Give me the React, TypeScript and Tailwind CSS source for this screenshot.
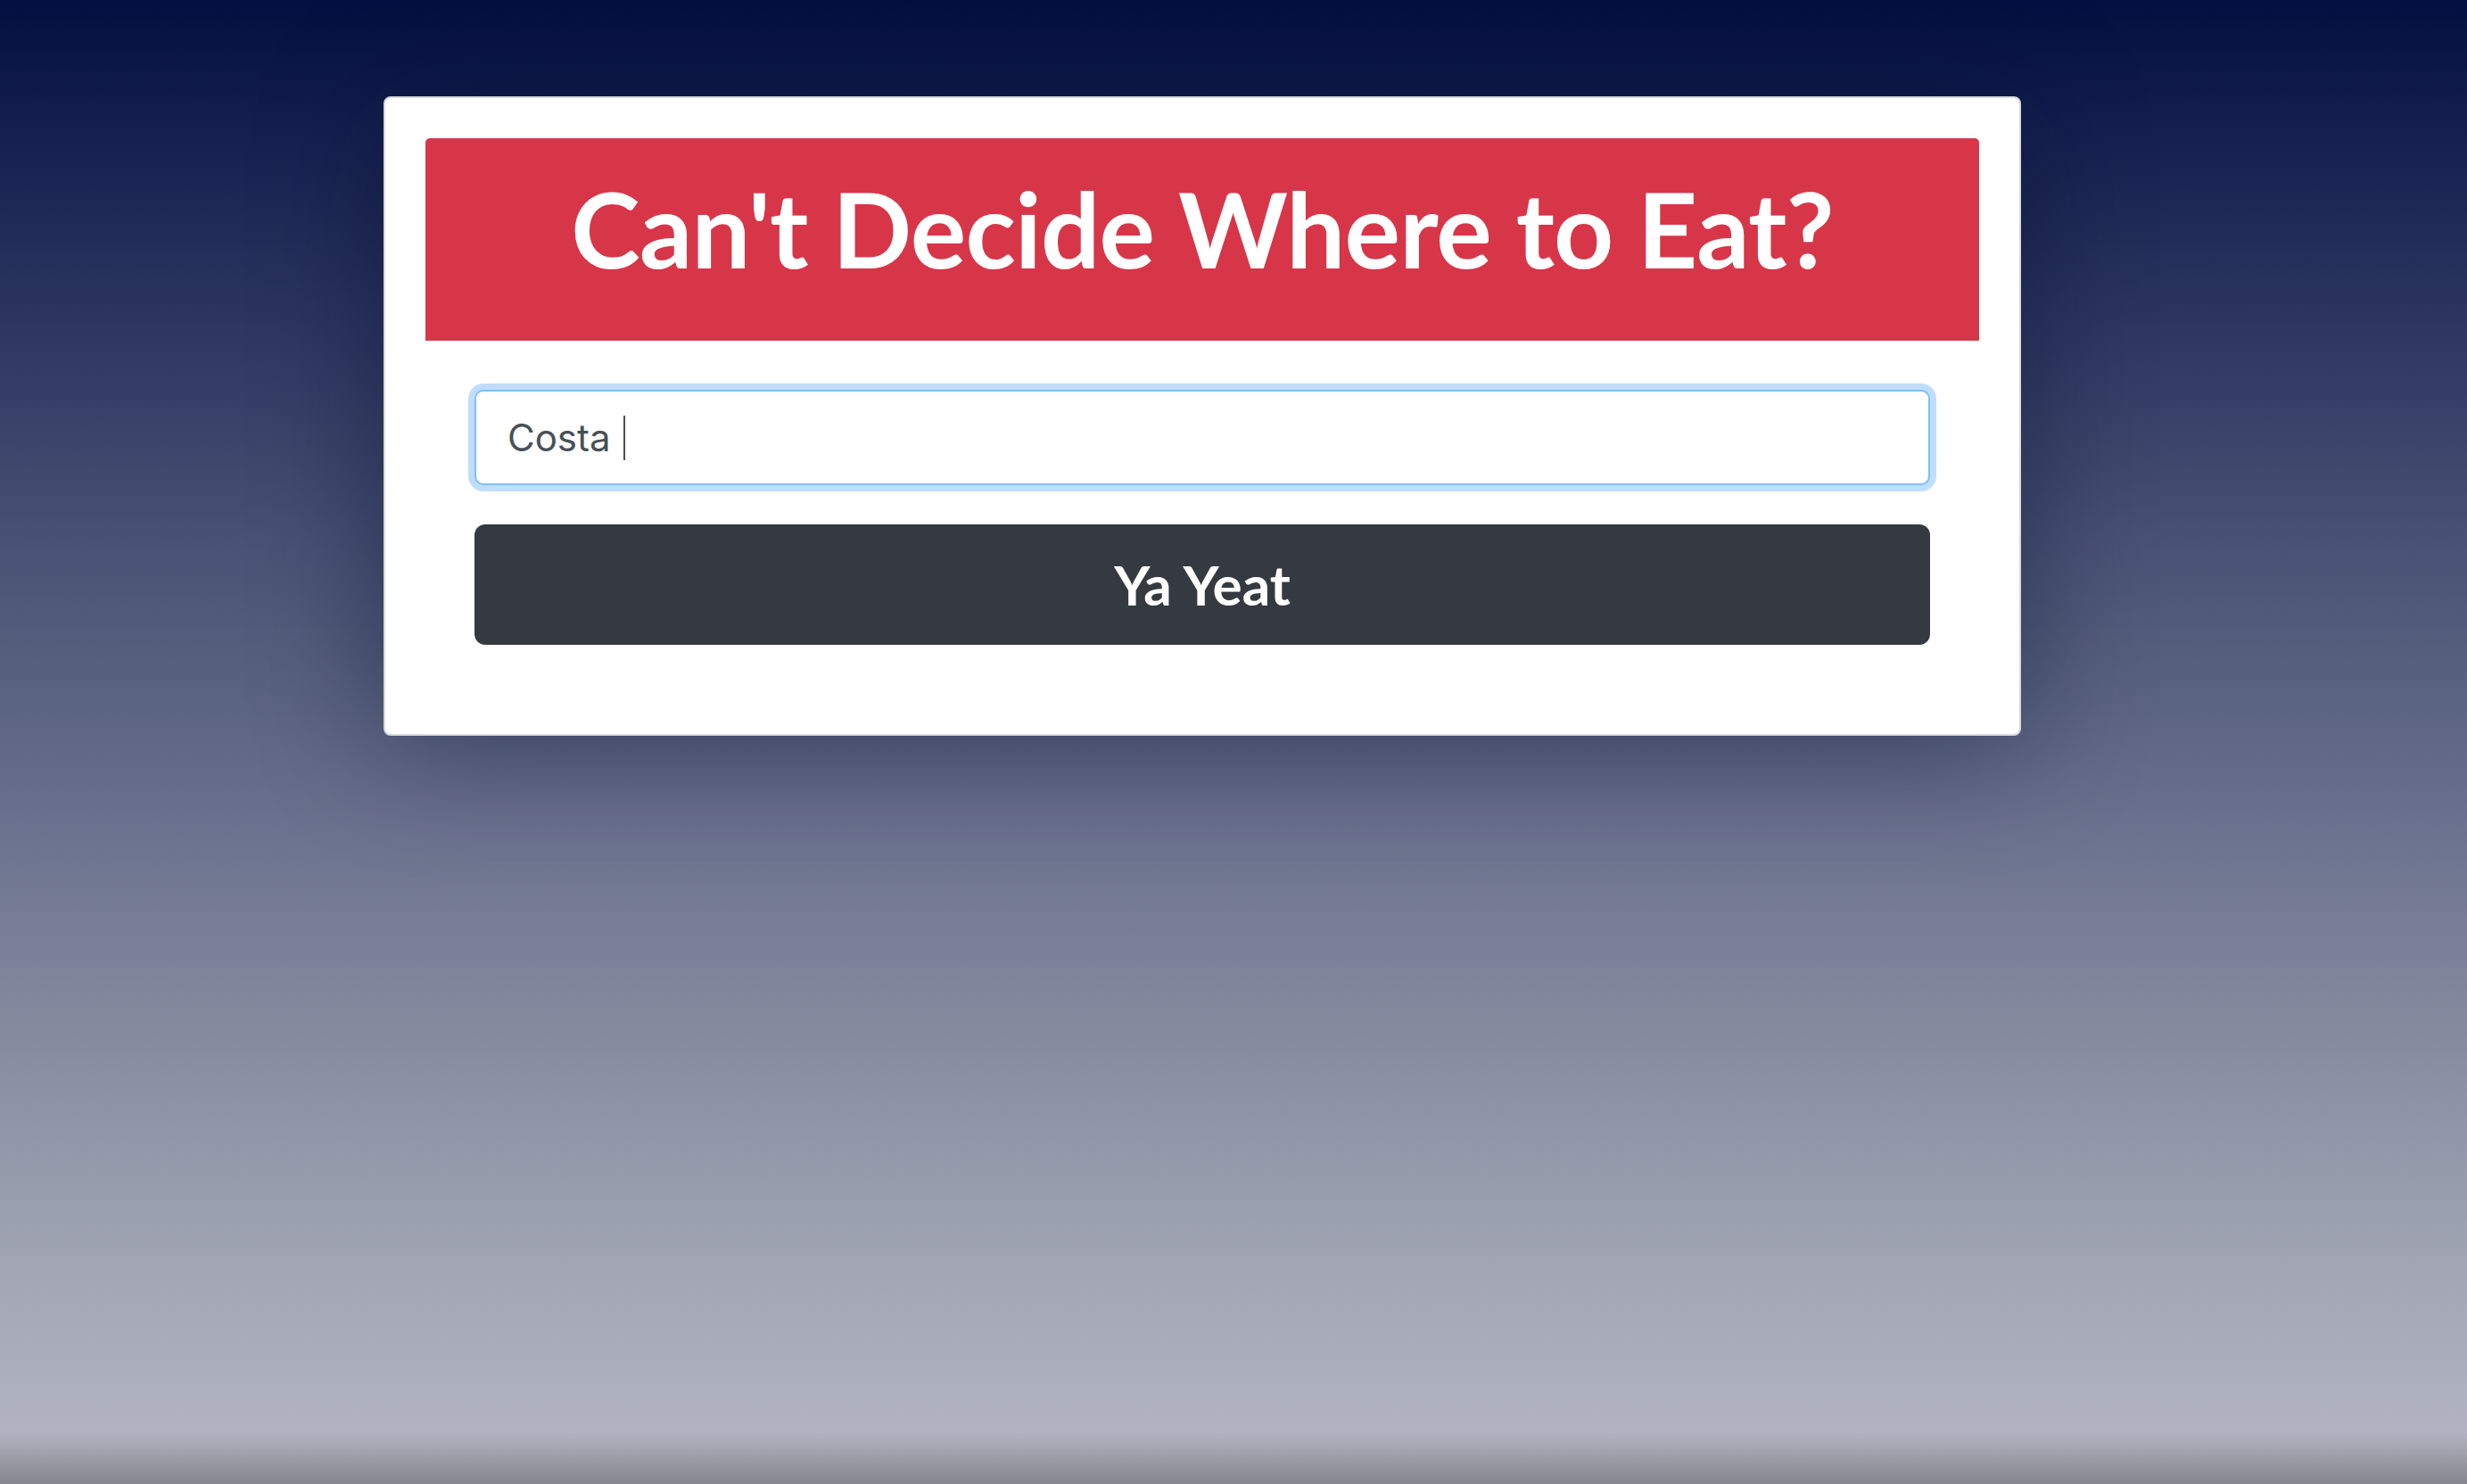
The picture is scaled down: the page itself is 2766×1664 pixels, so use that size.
import React from "react";

export default function App() {
  return (
    <div className="w-full min-h-[1664px] h-[1664px] overflow-hidden bg-[linear-gradient(180deg,#030f40_0%,#131e4d_8%,#232e5a_17%,#363f67_27%,#4a5275_37%,#5b6382_47%,#6d7490_57%,#80869b_67%,#9297a9_77%,#a4a8b6_87%,#b1b4c0_96.5%,#9a9ca6_98.3%,#85878f_100%)]">
      <div className="pt-[108px] pl-[430px]">
        <div className="w-[1836px] h-[717px] bg-white rounded-[8px] border-2 border-[#d9d9dc] shadow-[0_10px_140px_rgba(5,10,40,0.45)] p-[45px] flex flex-col">
          <div className="h-[227px] bg-[#d73649] rounded-t-[5px] flex items-center justify-center pb-[24px]">
            <h1 className="text-white text-[117px] font-bold leading-none tracking-[-0.8px] font-['Lato','Noto_Sans',sans-serif]">
              Can't Decide Where to Eat?
            </h1>
          </div>
          <div className="px-[55px] pt-[55px] flex flex-col gap-[44px]">
            <div className="h-[107px] rounded-[10px] border-2 border-[#80bdff] shadow-[0_0_0_7px_rgba(0,123,255,0.25)] bg-white flex items-center pl-[35px]">
              <span className="text-[42px] text-[#495057] font-['Inter','Noto_Sans',sans-serif] leading-none">
                Costa
              </span>
              <span className="ml-[14px] w-[2px] h-[50px] bg-[#4a4f55]" />
            </div>
            <button className="h-[135px] w-full rounded-[12px] bg-[#353940] text-white text-[62px] font-bold leading-none font-['Lato','Noto_Sans',sans-serif] flex items-center justify-center pb-[2px]">
              Ya Yeat
            </button>
          </div>
        </div>
      </div>
    </div>
  );
}
